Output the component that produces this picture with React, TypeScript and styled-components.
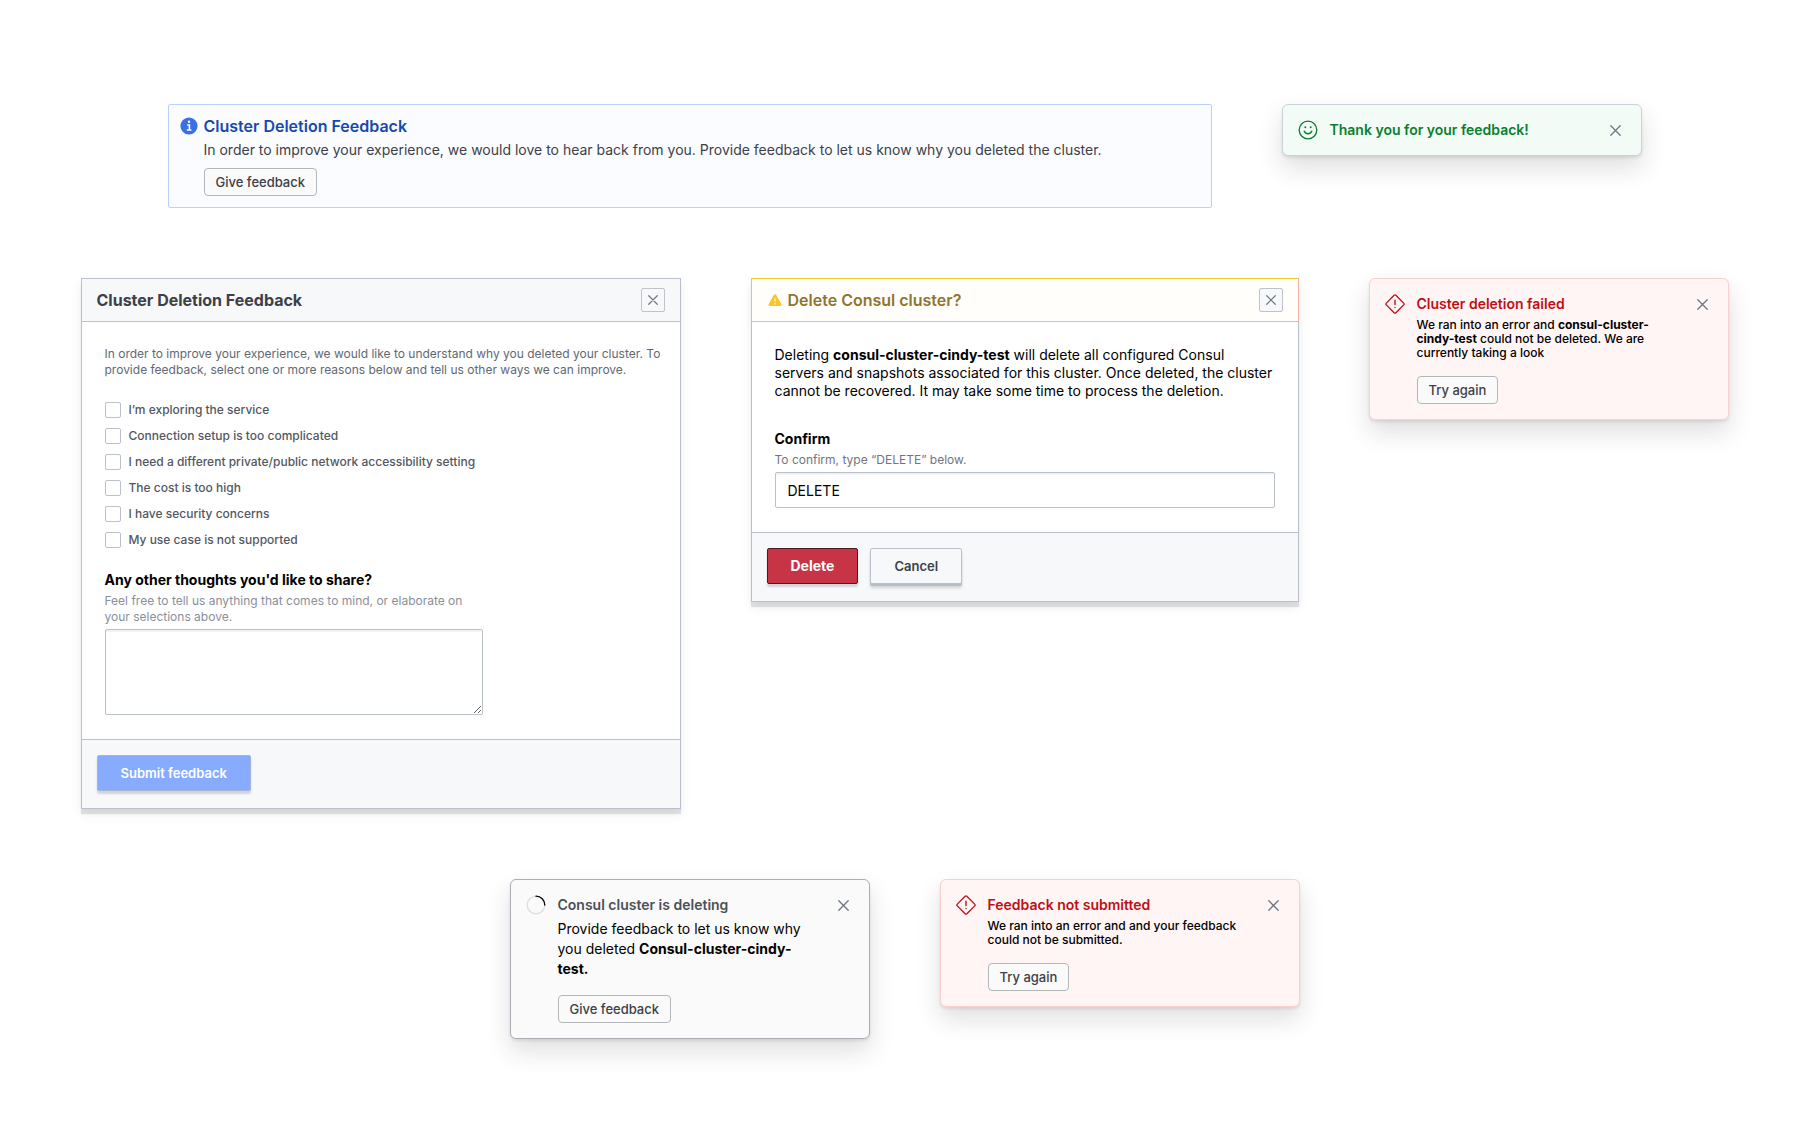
import React, { useState } from "react";
import styled, { createGlobalStyle, css } from "styled-components";

const GlobalStyle = createGlobalStyle`
  *, *::before, *::after { box-sizing: border-box; }
  body {
    margin: 0;
    background: #ffffff;
    color: #000000;
    font-family: Inter, "Liberation Sans", sans-serif;
    font-size: 14px;
    line-height: 20px;
  }
  h2, h3, p, fieldset { margin: 0; padding: 0; border: 0; }
  button, input, textarea { font-family: inherit; }
  button { cursor: pointer; }
`;

const Page = styled.main`
  display: flex;
  flex-direction: column;
  gap: 70px;
  padding: 104px 40px;
`;

const Row = styled.div`
  display: flex;
  justify-content: center;
  align-items: flex-start;
  gap: 70px;
`;

/* ---------- shared controls ---------- */

const SmallButton = styled.button`
  height: 28px;
  padding: 0 11px;
  border: 1px solid #b3b7b9;
  border-radius: 4px;
  background: #fafafa;
  color: #3d4047;
  font-size: 13px;
  font-weight: 500;
  line-height: 16px;
  white-space: nowrap;
`;

const IconButton = styled.button<{ $boxed?: boolean }>`
  display: flex;
  flex: none;
  align-items: center;
  justify-content: center;
  width: ${(p) => (p.$boxed ? "24px" : "20px")};
  height: ${(p) => (p.$boxed ? "24px" : "20px")};
  padding: 0;
  border: ${(p) => (p.$boxed ? "1px solid #bfc4ca" : "0")};
  border-radius: 2px;
  background: ${(p) => (p.$boxed ? "#f7f8fa" : "transparent")};
  color: #6f7682;
`;

type ButtonKind = "submit" | "danger" | "plain";

const buttonKinds = {
  submit: css`
    border-color: #a3b4d4;
    background: #86abff;
    color: #ffffff;
    box-shadow: 0 3px 2px rgba(60, 70, 80, 0.2);
  `,
  danger: css`
    border-color: #4a1a20;
    background: #c73445;
    color: #ffffff;
    box-shadow: 0 3px 2px rgba(60, 70, 80, 0.2);
    font-size: 14px;
    font-weight: 700;
  `,
  plain: css`
    border-color: #bac1cc;
    background: #f7f8fa;
    color: #3d4047;
    box-shadow: 0 2px 0 #b6bec7, 0 4px 3px rgba(60, 70, 80, 0.2);
  `,
};

const ActionButton = styled.button<{ $kind: ButtonKind }>`
  height: 36px;
  padding: 0 23px;
  border: 1px solid;
  border-radius: 2px;
  font-size: 13px;
  font-weight: 600;
  line-height: 16px;
  white-space: nowrap;
  ${(p) => buttonKinds[p.$kind]}
`;

/* ---------- banner ---------- */

const Banner = styled.section`
  display: flex;
  flex: 0 1 1044px;
  gap: 5px;
  padding: 11px;
  border: 1px solid #bbd1fb;
  border-radius: 2px;
  background: #fbfcff;
`;

const BannerIcon = styled.span`
  display: flex;
  flex: none;
  align-items: center;
  justify-content: center;
  width: 19px;
  height: 20px;
`;

const BannerTitle = styled.h2`
  color: #1549b0;
  font-size: 16px;
  font-weight: 600;
  line-height: 20px;
`;

const BannerText = styled.p`
  margin: 4px 0 8px;
  color: #3d4047;
`;

/* ---------- toast ---------- */

type Tone = "success" | "critical" | "neutral";

const tones = {
  success: { bg: "#f2fbf6", border: "#cbd3da", ink: "#0a7f2c" },
  critical: { bg: "#fff5f5", border: "#f9d0d0", ink: "#c00f14" },
  neutral: { bg: "#fafafa", border: "#abaeb4", ink: "#4d5057" },
};

const ToastBox = styled.section<{ $tone: Tone }>`
  display: flex;
  flex: 0 1 360px;
  padding: 15px;
  border: 1px solid ${(p) => tones[p.$tone].border};
  border-radius: 6px;
  background: ${(p) => tones[p.$tone].bg};
  box-shadow: 0 2px 3px rgba(37, 38, 45, 0.1), 0 12px 24px rgba(37, 38, 45, 0.15);
`;

const ToastIcon = styled.span<{ $tone: Tone }>`
  flex: none;
  height: 20px;
  margin-right: 12px;
  color: ${(p) => tones[p.$tone].ink};
`;

const ToastContent = styled.div`
  flex: 1;
  min-width: 0;
  margin-right: 24px;
`;

const ToastTitle = styled.h2<{ $tone: Tone }>`
  color: ${(p) => tones[p.$tone].ink};
  font-size: 14px;
  font-weight: 600;
  line-height: 20px;
`;

const ToastText = styled.p<{ $small?: boolean }>`
  margin: 4px 0 16px;
  font-size: ${(p) => (p.$small ? "12px" : "14px")};
  font-weight: ${(p) => (p.$small ? 500 : 400)};
  line-height: ${(p) => (p.$small ? "14px" : "20px")};

  strong { font-weight: 700; }
`;

/* ---------- modal ---------- */

const ModalBox = styled.section<{ $width: number }>`
  flex: 0 1 ${(p) => p.$width}px;
  min-width: 0;
  border: 1px solid #bac1cc;
  background: #ffffff;
  box-shadow: 0 5px 1px rgba(0, 0, 0, 0.1), 0 5px 10px rgba(0, 0, 0, 0.08);
`;

const ModalHeader = styled.header<{ $warning?: boolean }>`
  display: flex;
  align-items: center;
  justify-content: space-between;
  padding: 9px 15px;
  border-bottom: 1px solid #bac1cc;
  background: #f7f8fa;
  color: #3d4047;
  ${(p) =>
    p.$warning &&
    css`
      margin: -1px -1px 0;
      border: 1px solid #fac52b;
      border-left-color: #f2b5a4;
      border-right-color: #f2b5a4;
      background: #fffefa;
      color: #8f7530;
    `}
`;

const ModalTitle = styled.h2<{ $warning?: boolean }>`
  display: flex;
  align-items: center;
  gap: 6px;
  padding-left: ${(p) => (p.$warning ? "1px" : "0")};
  font-size: 16px;
  font-weight: ${(p) => (p.$warning ? 600 : 700)};
  line-height: 20px;
`;

const ModalBody = styled.div`
  padding: 24px 23px;
`;

const ModalFooter = styled.footer`
  display: flex;
  gap: 12px;
  padding: 15px 15px 17px;
  border-top: 1px solid #bac1cc;
  background: #f7f8fa;
`;

const Intro = styled.p`
  color: #626873;
  font-size: 12px;
  line-height: 16px;
  white-space: nowrap;
`;

const Warning = styled.p`
  line-height: 18px;

  strong { font-weight: 700; }
`;

const Reasons = styled.fieldset`
  display: flex;
  flex-direction: column;
  gap: 10px;
  margin: 24px 0;
`;

const Reason = styled.label`
  display: flex;
  align-items: center;
  gap: 8px;
  color: #525761;
  font-size: 12px;
  font-weight: 500;
  line-height: 16px;
`;

const Tick = styled.input`
  flex: none;
  width: 16px;
  height: 16px;
  margin: 0;
  border: 1px solid #bac1cc;
  border-radius: 2px;
  background: #ffffff;
  appearance: none;

  &:checked { border-color: #1563ff; background: #1563ff; }
`;

const Field = styled.div<{ $spaced?: boolean }>`
  display: flex;
  flex-direction: column;
  max-width: ${(p) => (p.$spaced ? "none" : "378px")};
  margin-top: ${(p) => (p.$spaced ? "31px" : "0")};
`;

const FieldLabel = styled.label`
  font-weight: 700;
  line-height: 16px;
`;

const Hint = styled.p<{ $faint?: boolean }>`
  margin: 5px 0 4px;
  color: ${(p) => (p.$faint ? "#8a8f99" : "#6f7682")};
  font-size: 12px;
  line-height: 16px;
`;

const inputFrame = css`
  width: 100%;
  border: 1px solid #bac1cc;
  border-radius: 2px;
  background: #ffffff;
  box-shadow: inset 0 2px 1px rgba(60, 70, 80, 0.07);
  font-size: 14px;
  color: #000000;
`;

const TextInput = styled.input`
  ${inputFrame}
  height: 36px;
  padding: 0 12px;
`;

const TextArea = styled.textarea`
  ${inputFrame}
  display: block;
  height: 86px;
  padding: 8px 12px;
`;

/* ---------- icons ---------- */

const InfoIcon = () => (
  <svg width="18" height="18" viewBox="0 0 18 18" aria-hidden="true">
    <circle cx="9" cy="9" r="8.6" fill="#3b6fe6" />
    <circle cx="9" cy="4.8" r="1.2" fill="#fff" />
    <path d="M7.2 8h2.2v5M6.8 13h4.6" fill="none" stroke="#fff" strokeWidth="1.6" />
  </svg>
);

const SmileIcon = () => (
  <svg width="20" height="20" viewBox="0 0 20 20" fill="none" stroke="currentColor" strokeWidth="1.3" strokeLinecap="round" aria-hidden="true">
    <circle cx="10" cy="10" r="8.8" />
    <path d="M6.3 11.2c.7 1.6 2 2.5 3.7 2.5s3-.9 3.7-2.5" strokeWidth="1.5" />
    <path d="M7.3 7.3h.01M12.7 7.3h.01" strokeWidth="1.9" />
  </svg>
);

const DiamondIcon = () => (
  <svg width="20" height="20" viewBox="0 0 20 20" fill="none" stroke="currentColor" strokeWidth="1.3" strokeLinecap="round" aria-hidden="true">
    <path d="M9.1 1.3 1.3 9.1a1.3 1.3 0 0 0 0 1.8l7.8 7.8a1.3 1.3 0 0 0 1.8 0l7.8-7.8a1.3 1.3 0 0 0 0-1.8l-7.8-7.8a1.3 1.3 0 0 0-1.8 0Z" />
    <path d="M10 6.2v4.4M10 13.4v.1" strokeWidth="1.4" />
  </svg>
);

const SpinnerIcon = () => (
  <svg width="20" height="20" viewBox="0 0 20 20" fill="none" strokeWidth="1.3" aria-hidden="true">
    <circle cx="10" cy="10" r="8.8" stroke="#dcdfe0" />
    <path d="M10 1.2A8.8 8.8 0 0 1 18.8 10" stroke="#000" strokeLinecap="round" />
  </svg>
);

const WarningIcon = () => (
  <svg width="14" height="14" viewBox="0 0 14 14" aria-hidden="true">
    <path d="M5.8 1.9 .7 11a1.3 1.3 0 0 0 1.1 2h10.4a1.3 1.3 0 0 0 1.1-2L8.2 1.9a1.4 1.4 0 0 0-2.4 0Z" fill="#fac52b" />
    <path d="M7 5.6v3M7 10v1.3" stroke="#fff" strokeWidth="1.3" />
  </svg>
);

const CloseIcon = ({ size = 11 }: { size?: number }) => (
  <svg width={size} height={size} viewBox="0 0 11 11" fill="none" stroke="currentColor" strokeWidth="1.3" strokeLinecap="round" aria-hidden="true">
    <path d="m.8.8 9.4 9.4M10.2.8.8 10.2" />
  </svg>
);

const toneIcons = { success: SmileIcon, critical: DiamondIcon, neutral: SpinnerIcon };

/* ---------- composed parts ---------- */

type ToastProps = { tone: Tone; title: string; action?: string; small?: boolean; children?: React.ReactNode };

function Toast({ tone, title, action, small, children }: ToastProps) {
  const Icon = toneIcons[tone];
  return (
    <ToastBox $tone={tone}>
      <ToastIcon $tone={tone}><Icon /></ToastIcon>
      <ToastContent>
        <ToastTitle $tone={tone}>{title}</ToastTitle>
        {children && <ToastText $small={small}>{children}</ToastText>}
        {action && <SmallButton type="button">{action}</SmallButton>}
      </ToastContent>
      <IconButton type="button" aria-label="Dismiss"><CloseIcon /></IconButton>
    </ToastBox>
  );
}

const reasons = [
  "I’m exploring the service",
  "Connection setup is too complicated",
  "I need a different private/public network accessibility setting",
  "The cost is too high",
  "I have security concerns",
  "My use case is not supported",
];

function FeedbackModal() {
  return (
    <ModalBox $width={600} role="dialog" aria-labelledby="feedback-title">
      <ModalHeader>
        <ModalTitle id="feedback-title">Cluster Deletion Feedback</ModalTitle>
        <IconButton type="button" $boxed aria-label="Close"><CloseIcon size={10} /></IconButton>
      </ModalHeader>
      <ModalBody>
        <Intro>
          In order to improve your experience, we would like to understand why you deleted your cluster. To
          <br />
          provide feedback, select one or more reasons below and tell us other ways we can improve.
        </Intro>
        <Reasons aria-label="Reasons">
          {reasons.map((reason) => (
            <Reason key={reason}>
              <Tick type="checkbox" name="reason" value={reason} />
              {reason}
            </Reason>
          ))}
        </Reasons>
        <Field>
          <FieldLabel htmlFor="thoughts">Any other thoughts you'd like to share?</FieldLabel>
          <Hint $faint id="thoughts-hint">
            Feel free to tell us anything that comes to mind, or elaborate on your selections above.
          </Hint>
          <TextArea id="thoughts" aria-describedby="thoughts-hint" />
        </Field>
      </ModalBody>
      <ModalFooter>
        <ActionButton type="button" $kind="submit">Submit feedback</ActionButton>
      </ModalFooter>
    </ModalBox>
  );
}

function DeleteModal() {
  const [value, setValue] = useState("DELETE");
  return (
    <ModalBox $width={548} role="dialog" aria-labelledby="delete-title">
      <ModalHeader $warning>
        <ModalTitle $warning id="delete-title"><WarningIcon />Delete Consul cluster?</ModalTitle>
        <IconButton type="button" $boxed aria-label="Close"><CloseIcon size={10} /></IconButton>
      </ModalHeader>
      <ModalBody>
        <Warning>
          Deleting <strong>consul-cluster-cindy-test</strong> will delete all configured Consul servers and
          snapshots associated for this cluster. Once deleted, the cluster cannot be recovered. It may take
          some time to process the deletion.
        </Warning>
        <Field $spaced>
          <FieldLabel htmlFor="confirm">Confirm</FieldLabel>
          <Hint id="confirm-hint">To confirm, type “DELETE” below.</Hint>
          <TextInput
            id="confirm"
            type="text"
            aria-describedby="confirm-hint"
            value={value}
            onChange={(e) => setValue(e.target.value)}
          />
        </Field>
      </ModalBody>
      <ModalFooter>
        <ActionButton type="button" $kind="danger">Delete</ActionButton>
        <ActionButton type="button" $kind="plain">Cancel</ActionButton>
      </ModalFooter>
    </ModalBox>
  );
}

export default function App() {
  return (
    <>
      <GlobalStyle />
      <Page>
        <Row>
          <Banner>
            <BannerIcon><InfoIcon /></BannerIcon>
            <div>
              <BannerTitle>Cluster Deletion Feedback</BannerTitle>
              <BannerText>
                In order to improve your experience, we would love to hear back from you. Provide feedback to
                let us know why you deleted the cluster.
              </BannerText>
              <SmallButton type="button">Give feedback</SmallButton>
            </div>
          </Banner>
          <Toast tone="success" title="Thank you for your feedback!" />
        </Row>
        <Row>
          <FeedbackModal />
          <DeleteModal />
          <Toast tone="critical" title="Cluster deletion failed" action="Try again" small>
            We ran into an error and <strong>consul-cluster-cindy-test</strong> could not be deleted. We are
            currently taking a look
          </Toast>
        </Row>
        <Row>
          <Toast tone="neutral" title="Consul cluster is deleting" action="Give feedback">
            Provide feedback to let us know why you deleted <strong>Consul-cluster-cindy-test.</strong>
          </Toast>
          <Toast tone="critical" title="Feedback not submitted" action="Try again" small>
            We ran into an error and and your feedback could not be submitted.
          </Toast>
        </Row>
      </Page>
    </>
  );
}
